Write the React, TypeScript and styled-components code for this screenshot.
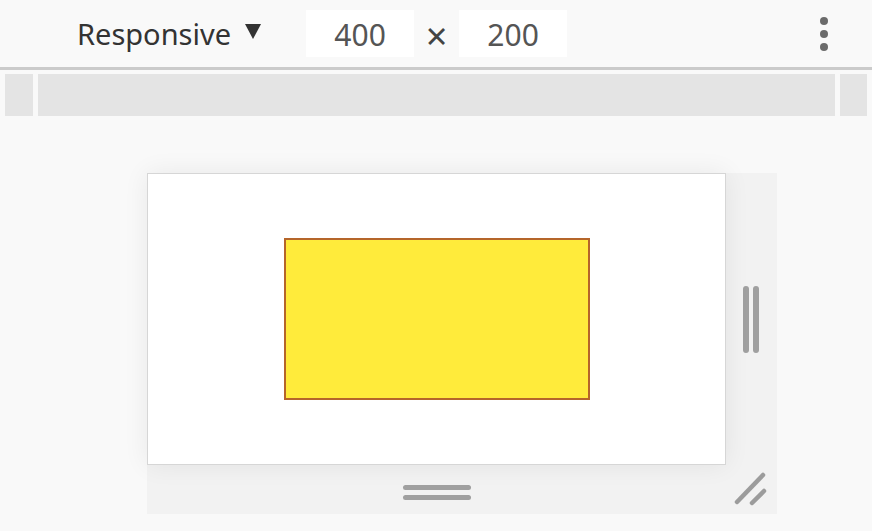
import React from "react";
import styled, { createGlobalStyle } from "styled-components";

const Global = createGlobalStyle`
  html, body { margin: 0; padding: 0; }
  body { background: #f9f9f9; font-family: "Noto Sans", "Open Sans", sans-serif; }
`;

const Page = styled.div`
  width: 872px;
  height: 531px;
  background: #f9f9f9;
  display: flex;
  flex-direction: column;
  overflow: hidden;
`;

const Toolbar = styled.div`
  height: 67px;
  display: flex;
  align-items: center;
  padding-left: 77px;
  padding-right: 44px;
  border-bottom: 3px solid #cbcbcb;
  box-sizing: content-box;
`;

const DeviceSelect = styled.div`
  display: flex;
  align-items: center;
  gap: 14px;
  font-size: 29px;
  color: #333;
  margin-right: 45px;
`;

const Caret = styled.span`
  width: 0;
  height: 0;
  border-left: 8.5px solid transparent;
  border-right: 8.5px solid transparent;
  border-top: 15px solid #333;
  margin-top: -4px;
`;

const DimInput = styled.div`
  width: 108px;
  height: 47px;
  background: #fff;
  display: flex;
  align-items: center;
  justify-content: center;
  font-size: 30px;
  color: #555;
  padding-top: 1px;
  box-sizing: border-box;
`;

const Times = styled.span`
  font-size: 38px;
  font-weight: 400;
  color: #444;
  width: 45px;
  text-align: center;
  line-height: 1;
  margin-top: 3px;
`;

const Spacer = styled.div`
  flex: 1;
`;

const Kebab = styled.div`
  display: flex;
  flex-direction: column;
  gap: 5px;
  margin-top: 1px;
`;

const Dot = styled.span`
  width: 8px;
  height: 8px;
  border-radius: 50%;
  background: #6b6b6b;
`;

const Ruler = styled.div`
  margin: 4px 5px 0;
  height: 42px;
  display: flex;
  gap: 5px;
`;

const RulerSeg = styled.div<{ $w?: number }>`
  background: #e4e4e4;
  ${(p) => (p.$w ? `width: ${p.$w}px;` : "flex: 1;")}
`;

const Stage = styled.div`
  padding: 57px 0 0 147px;
  display: flex;
`;

const DeviceGrid = styled.div`
  display: grid;
  grid-template-columns: 579px 51px;
  grid-template-rows: 292px 49px;
  background: #f2f2f2;
`;

const Frame = styled.div`
  background: #fff;
  border: 1px solid #d6d6d6;
  box-shadow: 0 0 24px rgba(0, 0, 0, 0.07);
  display: flex;
  align-items: center;
  justify-content: center;
  position: relative;
  z-index: 1;
`;

const Box = styled.div`
  width: 302px;
  height: 158px;
  background: #ffeb3b;
  border: 2px solid #b5652a;
`;

const SideHandle = styled.div`
  display: flex;
  align-items: center;
  justify-content: center;
  gap: 4px;
  padding-right: 2px;
`;

const VBar = styled.span`
  width: 6px;
  height: 67px;
  border-radius: 3px;
  background: #a0a0a0;
`;

const BottomHandle = styled.div`
  display: flex;
  flex-direction: column;
  align-items: center;
  justify-content: center;
  gap: 5px;
  padding-top: 5px;
`;

const HBar = styled.span`
  width: 68px;
  height: 5px;
  border-radius: 3px;
  background: #a0a0a0;
`;

const Corner = styled.div`
  display: flex;
  align-items: flex-start;
  justify-content: flex-start;
`;

export default function App() {
  return (
    <Page>
      <Global />
      <Toolbar>
        <DeviceSelect>
          <span>Responsive</span>
          <Caret />
        </DeviceSelect>
        <DimInput>400</DimInput>
        <Times>×</Times>
        <DimInput>200</DimInput>
        <Spacer />
        <Kebab>
          <Dot />
          <Dot />
          <Dot />
        </Kebab>
      </Toolbar>
      <Ruler>
        <RulerSeg $w={28} />
        <RulerSeg />
        <RulerSeg $w={27} />
      </Ruler>
      <Stage>
        <DeviceGrid>
          <Frame>
            <Box />
          </Frame>
          <SideHandle>
            <VBar />
            <VBar />
          </SideHandle>
          <BottomHandle>
            <HBar />
            <HBar />
          </BottomHandle>
          <Corner>
            <svg width="51" height="49" viewBox="0 0 51 49">
              <g stroke="#9c9c9c" strokeWidth="4.5" strokeLinecap="round">
                <line x1="37" y1="10" x2="11" y2="37" />
                <line x1="38" y1="26" x2="26" y2="38" />
              </g>
            </svg>
          </Corner>
        </DeviceGrid>
      </Stage>
    </Page>
  );
}
